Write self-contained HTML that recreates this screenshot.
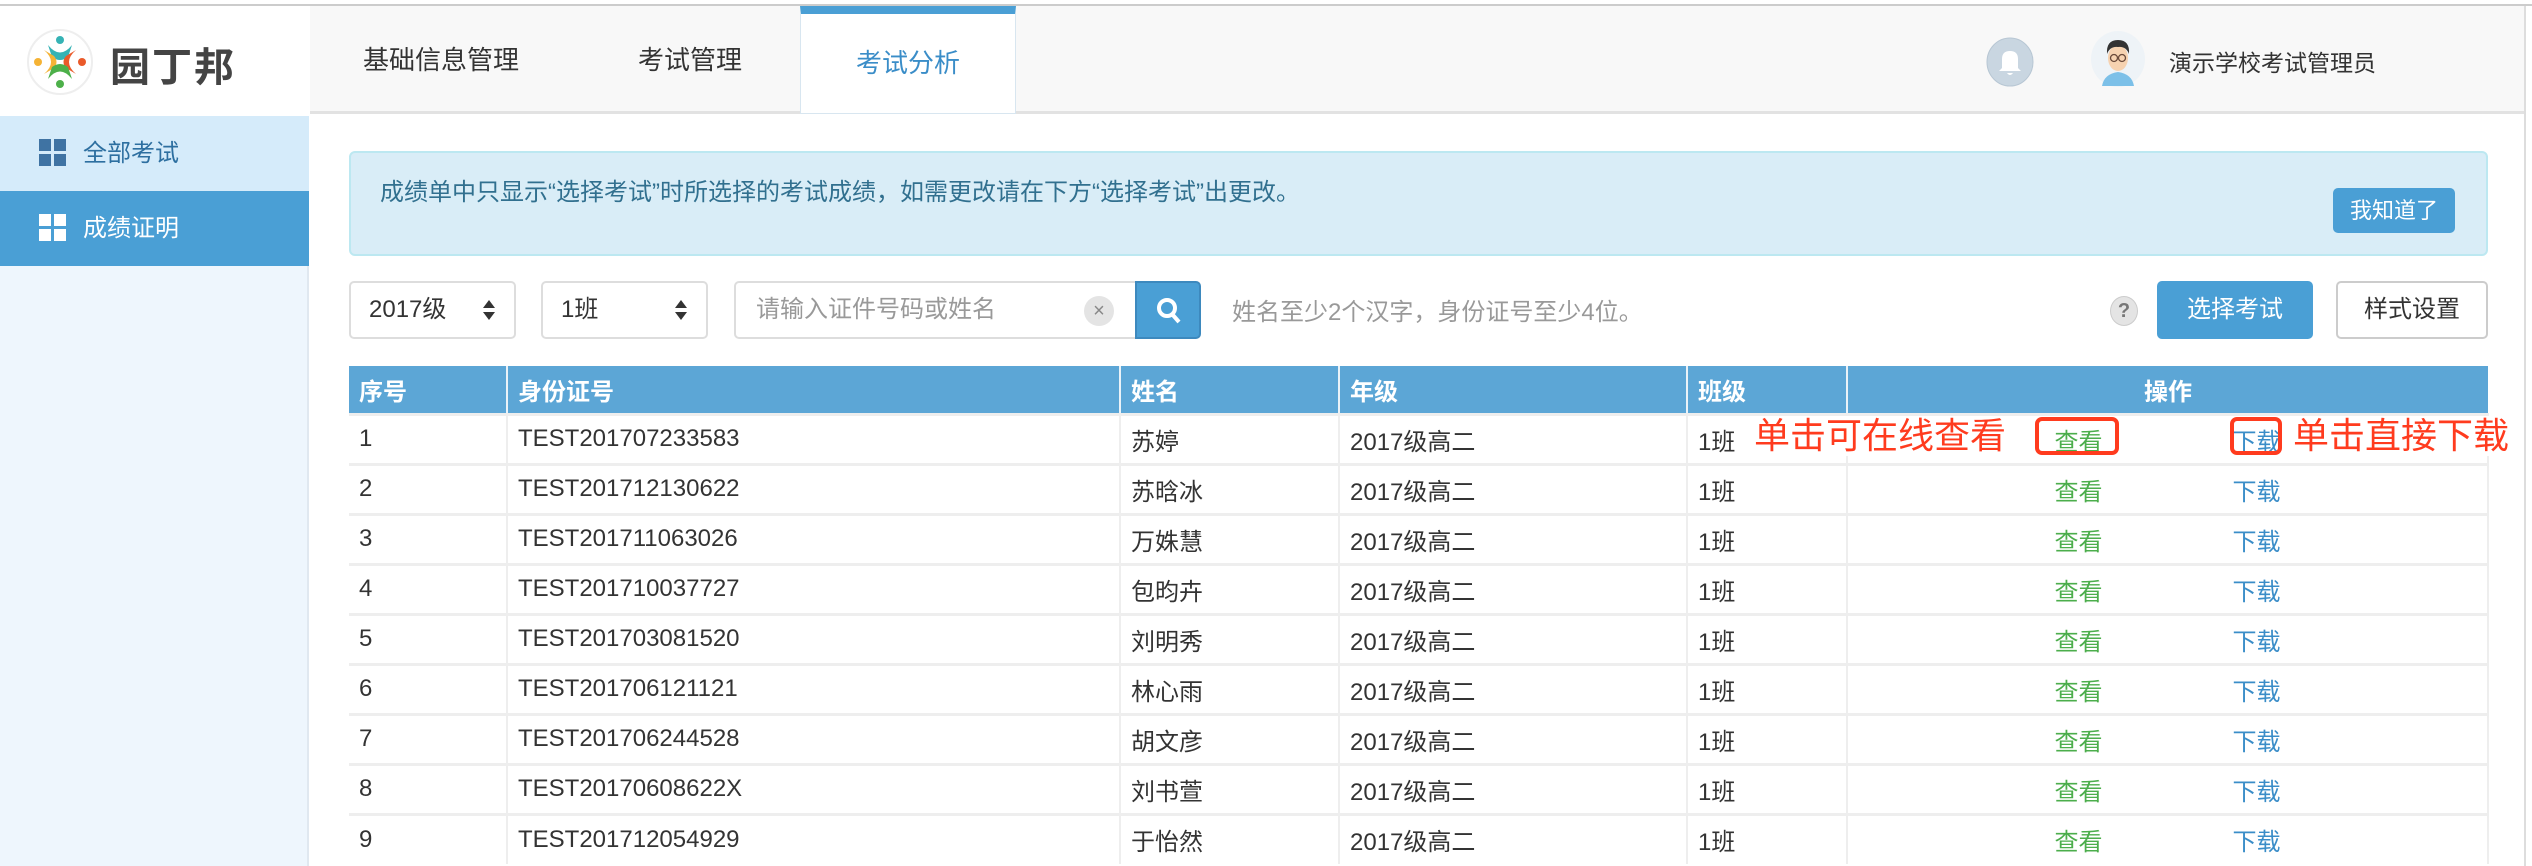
<!DOCTYPE html>
<html><head><meta charset="utf-8">
<style>
*{margin:0;padding:0;box-sizing:border-box}
body{width:2532px;height:866px;overflow:hidden;background:#fff;font-family:"Liberation Sans","Noto Sans CJK SC",sans-serif;color:#333;position:relative}
.a{position:absolute}
.topline{left:0;top:4px;width:2532px;height:2px;background:#ccc}
.header{left:0;top:6px;width:2526px;height:108px;background:#f8f8f8;border-bottom:3px solid #e2e2e2}
.logo{left:0;top:6px;width:310px;height:108px;background:#fff}
.tab{top:6px;height:108px;line-height:108px;font-size:26px;color:#333}
.active{left:800px;width:216px;background:#fff;border:1px solid #d8e6f0;border-top:8px solid #4a9fd5;color:#3a8dc8;text-align:center;line-height:98px}
.side{left:0;top:116px;width:309px;height:750px;background:#eef6fd;border-right:2px solid #e0e8f0}
.si{left:0;width:309px;height:75px;font-size:24px;line-height:75px;padding-left:83px}
.ic{position:absolute;left:39px;top:23px;width:28px;height:28px}
.ic i{position:absolute;width:12px;height:12px}
.alert{left:349px;top:151px;width:2139px;height:105px;background:#d9edf7;border:2px solid #bce8f1;border-radius:6px}
.btn{font-size:24px;text-align:center;border-radius:5px}
.sel{top:281px;height:58px;border:2px solid #ddd;border-radius:5px;background:#fff;font-size:24px;line-height:54px;padding-left:18px}
.arr{position:absolute;right:18px;top:16px}
table{position:absolute;left:349px;top:366px;border-collapse:collapse;font-size:24px}
th{background:#5ca6d6;color:#fff;text-align:left;height:48px;padding:0 10px;font-weight:bold;border-right:2px solid #eaf2f8}
td{height:50px;padding:0 10px;border-top:3px solid #eee;border-right:2px solid #eee;color:#333}
.g{color:#4cae4c}.b{color:#3a8dc8}
.red{color:#ff3b1e;font-size:36px;line-height:40px}
.box{border:4px solid #ff3b1e;border-radius:7px}
</style></head><body>
<div class="a topline"></div>
<div class="a header"></div>
<div class="a logo">
 <svg class="a" style="left:26px;top:22px" width="68" height="68" viewBox="0 0 68 68">
  <circle cx="34" cy="34" r="32" fill="#fff" stroke="#eee" stroke-width="2"/>
  <circle cx="34" cy="12" r="4" fill="#36b3b5"/>
  <path d="M22 17 Q34 32 46 17 L42 29 Q34 35 26 29Z" fill="#36b3b5"/>
  <circle cx="12" cy="34" r="4" fill="#f5b335"/>
  <path d="M18 22 Q32 34 18 46 L28 40 Q33 34 28 28Z" fill="#f5b335"/>
  <circle cx="56" cy="34" r="4" fill="#ea5a2a"/>
  <path d="M50 22 Q36 34 50 46 L40 40 Q35 34 40 28Z" fill="#ea5a2a"/>
  <circle cx="34" cy="56" r="4" fill="#4db04a"/>
  <path d="M22 51 Q34 36 46 51 L42 39 Q34 33 26 39Z" fill="#4db04a"/>
 </svg>
 <div class="a" style="left:110px;top:29px;font-size:40px;color:#444;letter-spacing:2px;font-weight:bold">园丁邦</div>
</div>
<div class="a tab" style="left:363px">基础信息管理</div>
<div class="a tab" style="left:638px">考试管理</div>
<div class="a tab active">考试分析</div>
<svg class="a" style="left:1986px;top:37px" width="48" height="50" viewBox="0 0 48 50"><ellipse cx="24" cy="25" rx="23" ry="24" fill="#c9d6e1" stroke="#b7c6d3"/><path d="M16 31 L16 22 Q16 14 24 14 Q32 14 32 22 L32 31 L35 34 L13 34Z M21 36 Q24 40 27 36Z" fill="#fff"/></svg>
<svg class="a" style="left:2090px;top:30px" width="56" height="58" viewBox="0 0 56 58"><ellipse cx="28" cy="29" rx="27" ry="28" fill="#eef3f7"/><path d="M12 56 Q14 44 28 42 Q42 44 44 56Z" fill="#7cc0e8"/><ellipse cx="28" cy="28" rx="10" ry="13" fill="#f6d2b0"/><path d="M17 24 Q16 10 28 10 Q40 10 39 24 Q36 16 28 17 Q20 16 17 24Z" fill="#333"/><circle cx="24" cy="28" r="3.5" fill="none" stroke="#6a4a3a" stroke-width="1.3"/><circle cx="32" cy="28" r="3.5" fill="none" stroke="#6a4a3a" stroke-width="1.3"/></svg>
<div class="a" style="left:2169px;top:44px;font-size:23px;color:#333">演示学校考试管理员</div>
<div class="a" style="left:2524px;top:6px;width:2px;height:860px;background:#ddd"></div>

<div class="a side"></div>
<div class="a si" style="top:116px;background:#d5ebfa;color:#2d6fa0"><span class="ic"><i style="left:0;top:0;background:#3f73a3"></i><i style="left:15px;top:0;background:#3f73a3"></i><i style="left:0;top:15px;background:#3f73a3"></i><i style="left:15px;top:15px;background:#3f73a3"></i></span>全部考试</div>
<div class="a si" style="top:191px;background:#4a9fd5;color:#fff"><span class="ic"><i style="left:0;top:0;background:#fff"></i><i style="left:15px;top:0;background:#fff"></i><i style="left:0;top:15px;background:#fff"></i><i style="left:15px;top:15px;background:#fff"></i></span>成绩证明</div>

<div class="a alert"></div>
<div class="a" style="left:380px;top:172px;font-size:24px;color:#31708f">成绩单中只显示“选择考试”时所选择的考试成绩，如需更改请在下方“选择考试”出更改。</div>
<div class="a btn" style="left:2333px;top:188px;width:122px;height:45px;line-height:45px;background:#4a9fd5;color:#fff;font-size:22px">我知道了</div>

<div class="a sel" style="left:349px;width:167px">2017级<svg class="arr" width="14" height="22"><path d="M7 1 L13 9 L1 9Z M7 21 L13 13 L1 13Z" fill="#333"/></svg></div>
<div class="a sel" style="left:541px;width:167px">1班<svg class="arr" width="14" height="22"><path d="M7 1 L13 9 L1 9Z M7 21 L13 13 L1 13Z" fill="#333"/></svg></div>
<div class="a sel" style="left:734px;width:404px;color:#999;border-radius:5px 0 0 5px;padding-left:20px">请输入证件号码或姓名</div>
<div class="a" style="left:1084px;top:296px;width:30px;height:30px;border-radius:50%;background:#e4e4e4;color:#888;font-size:20px;text-align:center;line-height:30px">×</div>
<div class="a" style="left:1135px;top:281px;width:66px;height:58px;background:#4a9fd5;border:2px solid #3d89be;border-radius:0 5px 5px 0"><svg class="a" style="left:19px;top:14px" width="26" height="28"><circle cx="11" cy="11" r="8" fill="none" stroke="#fff" stroke-width="4"/><path d="M16 17 L23 25" stroke="#fff" stroke-width="4"/></svg></div>
<div class="a" style="left:1232px;top:292px;font-size:24px;color:#999">姓名至少2个汉字，身份证号至少4位。</div>
<div class="a" style="left:2110px;top:296px;width:28px;height:30px;border-radius:50%;background:#e4e4e4;border:1px solid #ccc;color:#777;font-size:20px;font-weight:bold;text-align:center;line-height:28px">?</div>
<div class="a btn" style="left:2157px;top:281px;width:156px;height:58px;line-height:58px;background:#4a9fd5;color:#fff">选择考试</div>
<div class="a btn" style="left:2336px;top:281px;width:152px;height:58px;line-height:54px;background:#fff;border:2px solid #ccc;color:#333">样式设置</div>

<table>
<tr><th style="width:158px">序号</th><th style="width:613px">身份证号</th><th style="width:219px">姓名</th><th style="width:348px">年级</th><th style="width:160px">班级</th><th style="width:641px;text-align:center;border-right:none">操作</th></tr>
<tr><td>1</td><td>TEST201707233583</td><td>苏婷</td><td>2017级高二</td><td>1班</td><td style="text-align:center"><span class="g" style="margin-right:130px">查看</span><span class="b">下载</span></td></tr>
<tr><td>2</td><td>TEST201712130622</td><td>苏晗冰</td><td>2017级高二</td><td>1班</td><td style="text-align:center"><span class="g" style="margin-right:130px">查看</span><span class="b">下载</span></td></tr>
<tr><td>3</td><td>TEST201711063026</td><td>万姝慧</td><td>2017级高二</td><td>1班</td><td style="text-align:center"><span class="g" style="margin-right:130px">查看</span><span class="b">下载</span></td></tr>
<tr><td>4</td><td>TEST201710037727</td><td>包昀卉</td><td>2017级高二</td><td>1班</td><td style="text-align:center"><span class="g" style="margin-right:130px">查看</span><span class="b">下载</span></td></tr>
<tr><td>5</td><td>TEST201703081520</td><td>刘明秀</td><td>2017级高二</td><td>1班</td><td style="text-align:center"><span class="g" style="margin-right:130px">查看</span><span class="b">下载</span></td></tr>
<tr><td>6</td><td>TEST201706121121</td><td>林心雨</td><td>2017级高二</td><td>1班</td><td style="text-align:center"><span class="g" style="margin-right:130px">查看</span><span class="b">下载</span></td></tr>
<tr><td>7</td><td>TEST201706244528</td><td>胡文彦</td><td>2017级高二</td><td>1班</td><td style="text-align:center"><span class="g" style="margin-right:130px">查看</span><span class="b">下载</span></td></tr>
<tr><td>8</td><td>TEST20170608622X</td><td>刘书萱</td><td>2017级高二</td><td>1班</td><td style="text-align:center"><span class="g" style="margin-right:130px">查看</span><span class="b">下载</span></td></tr>
<tr><td>9</td><td>TEST201712054929</td><td>于怡然</td><td>2017级高二</td><td>1班</td><td style="text-align:center"><span class="g" style="margin-right:130px">查看</span><span class="b">下载</span></td></tr>
</table>

<div class="a red" style="left:1754px;top:416px;background:#fff">单击可在线查看</div>
<div class="a box" style="left:2035px;top:417px;width:84px;height:38px"></div>
<div class="a box" style="left:2230px;top:417px;width:52px;height:38px"></div>
<div class="a red" style="left:2293px;top:416px;background:#fff">单击直接下载</div>
</body></html>
